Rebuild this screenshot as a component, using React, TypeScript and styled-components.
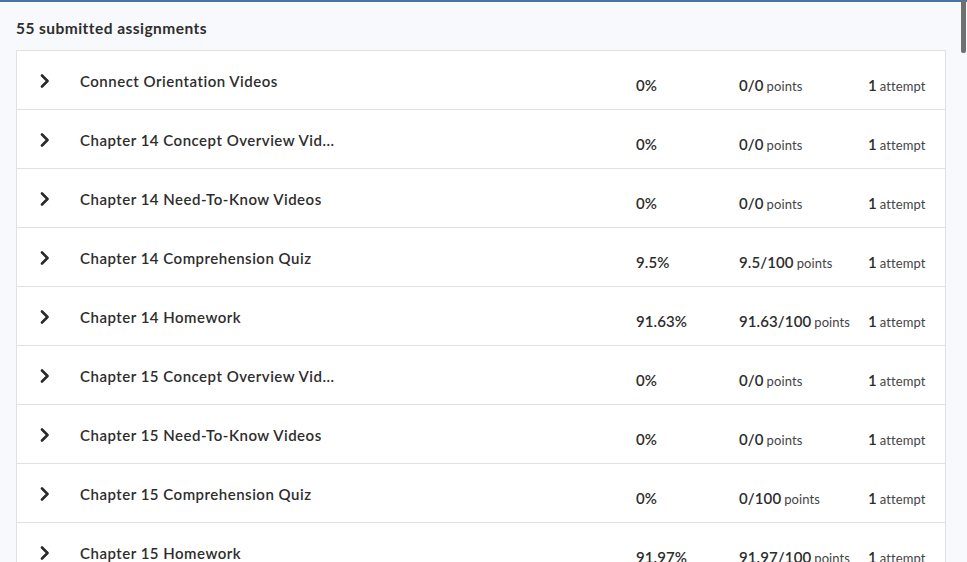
import React from "react";
import styled, { createGlobalStyle } from "styled-components";

const Global = createGlobalStyle`
  html, body { margin: 0; padding: 0; overflow: hidden; }
  body {
    background: #f8f9fc;
    font-family: "Lato", "Open Sans", sans-serif;
    color: #2b2b2b;
  }
`;

const Page = styled.div`
  border-top: 2px solid #4a73a5;
  padding: 0 21px 0 16px;
  height: 560px;
  overflow: hidden;
`;

const Heading = styled.h2`
  margin: 0;
  padding: 17px 0 0;
  height: 31px;
  font-size: 15.5px;
  font-weight: 700;
  color: #2e2e2e;
  letter-spacing: 0.45px;
`;

const List = styled.div`
  display: flex;
  flex-direction: column;
  border-top: 1px solid #e1e1e1;
`;

const Row = styled.div`
  display: grid;
  grid-template-columns: 41px 556px 103px 129px auto;
  align-items: center;
  height: 58px;
  padding-left: 22px;
  background: #ffffff;
  border: 1px solid #e1e1e1;
  border-top: none;
`;

const Chevron = styled.div`
  display: flex;
  align-items: center;
  padding-top: 1px;
`;

const Title = styled.div`
  font-size: 15px;
  font-weight: 600;
  color: #2d2d2d;
  padding-top: 2px;
  white-space: nowrap;
  letter-spacing: 0.5px;
`;

const Cell = styled.div`
  font-size: 15px;
  font-weight: 600;
  color: #2d2d2d;
  padding-top: 9px;
  white-space: nowrap;
  letter-spacing: 0.1px;
`;

const Unit = styled.span`
  font-size: 13px;
  font-weight: 400;
  color: #444;
  margin-left: 3px;
`;

const ScrollThumb = styled.div`
  position: fixed;
  top: 0;
  right: 1px;
  width: 5px;
  height: 53px;
  background: #707070;
  border-radius: 0 0 2px 2px;
`;

const rows = [
  ["Connect Orientation Videos", "0%", "0/0"],
  ["Chapter 14 Concept Overview Vid...", "0%", "0/0"],
  ["Chapter 14 Need-To-Know Videos", "0%", "0/0"],
  ["Chapter 14 Comprehension Quiz", "9.5%", "9.5/100"],
  ["Chapter 14 Homework", "91.63%", "91.63/100"],
  ["Chapter 15 Concept Overview Vid...", "0%", "0/0"],
  ["Chapter 15 Need-To-Know Videos", "0%", "0/0"],
  ["Chapter 15 Comprehension Quiz", "0%", "0/100"],
  ["Chapter 15 Homework", "91.97%", "91.97/100"],
];

const ChevronIcon = () => (
  <svg width="12" height="14" viewBox="0 0 12 14">
    <path d="M3 1.5 L8.5 7 L3 12.5" fill="none" stroke="#2a2a2a" strokeWidth="2.6" strokeLinecap="round" strokeLinejoin="round" />
  </svg>
);

export default function App() {
  return (
    <>
      <Global />
      <Page>
        <Heading>55 submitted assignments</Heading>
        <List>
          {rows.map(([t, p, pts]) => (
            <Row key={t}>
              <Chevron><ChevronIcon /></Chevron>
              <Title>{t}</Title>
              <Cell>{p}</Cell>
              <Cell>{pts}<Unit>points</Unit></Cell>
              <Cell>1<Unit>attempt</Unit></Cell>
            </Row>
          ))}
        </List>
      </Page>
      <ScrollThumb />
    </>
  );
}
